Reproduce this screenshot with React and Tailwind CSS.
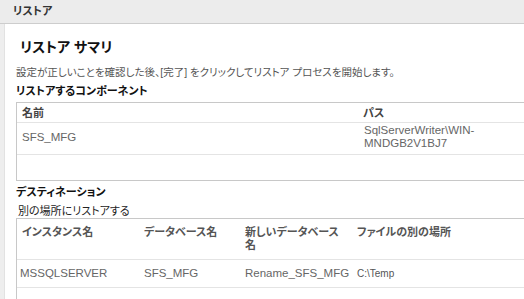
export default function App() {
    const font = "font-['Liberation_Sans','Noto_Sans_CJK_JP',sans-serif] [font-feature-settings:'palt']";

    return (
        <div className={`${font} w-[524px] h-[299px] overflow-hidden bg-white text-[#333]`}>
            {/* barra superior */}
            <div className="h-[24px] bg-[#ececec] border-b border-[#cdcdcd] flex items-center pl-[13px]">
                <span className="text-[11px] font-bold text-[#333] leading-none">リストア</span>
            </div>

            <div className="flex h-[275px]">
                <div className="w-[5px] shrink-0 bg-[#eeeeee] border-r border-[#e2e2e2]" />

                <div className="flex-1 pl-[11px] flex flex-col min-w-0">
                    <h1 className="mt-[14px] ml-[4px] text-[14px] leading-[18px] font-bold text-[#111]">リストア サマリ</h1>
                    <p className="mt-[9px] text-[10.5px] leading-[14px] text-[#555] whitespace-nowrap">
                        設定が正しいことを確認した後、[完了] をクリックしてリストア プロセスを開始します。
                    </p>
                    <h2 className="mt-[5px] text-[11px] leading-[14px] font-bold text-[#111]">リストアするコンポーネント</h2>

                    {/* tabla de componentes */}
                    <div className="mt-[4px] w-[540px] border border-[#c8c8c8]">
                        <div className="flex pt-[4px] pb-[2px] border-b border-[#e4e4e4] text-[11px] leading-[13px] font-bold text-[#444]">
                            <div className="w-[346px] pl-[5px]">名前</div>
                            <div className="pl-[0px]">パス</div>
                        </div>
                        <div className="flex items-center h-[32px] border-b border-[#e4e4e4] text-[11.5px] leading-[13px] text-[#666]">
                            <div className="w-[346px] pl-[5px] pb-[2px]">SFS_MFG</div>
                            <div className="w-[150px] pl-[1px] -mt-[4px]">SqlServerWriter\WIN-MNDGB2V1BJ7</div>
                        </div>
                        <div className="h-[25px]" />
                    </div>

                    <h2 className="mt-[4px] text-[11px] leading-[14px] font-bold text-[#111]">デスティネーション</h2>
                    <p className="mt-[5px] ml-[2px] text-[11px] leading-[14px] text-[#222]">別の場所にリストアする</p>

                    {/* tabla de destino */}
                    <div className="w-[540px] border border-[#c8c8c8]">
                        <div className="flex pt-[7px] pb-[7px] border-b border-[#e4e4e4] text-[11px] leading-[13px] font-bold text-[#555]">
                            <div className="w-[127px] pl-[5px]">インスタンス名</div>
                            <div className="w-[101px] pl-[0px]">データベース名</div>
                            <div className="w-[112px] pr-[10px]">新しいデータベース名</div>
                            <div>ファイルの別の場所</div>
                        </div>
                        <div className="flex items-center h-[28px] pb-[1px] border-b border-[#e4e4e4] text-[11.5px] leading-[13px] text-[#666]">
                            <div className="w-[127px] pl-[3px]">MSSQLSERVER</div>
                            <div className="w-[101px]">SFS_MFG</div>
                            <div className="w-[112px]">Rename_SFS_MFG</div>
                            <div className="text-[10px] text-[#555]">C:\Temp</div>
                        </div>
                        <div className="h-[30px]" />
                    </div>
                </div>
            </div>
        </div>
    );
}
